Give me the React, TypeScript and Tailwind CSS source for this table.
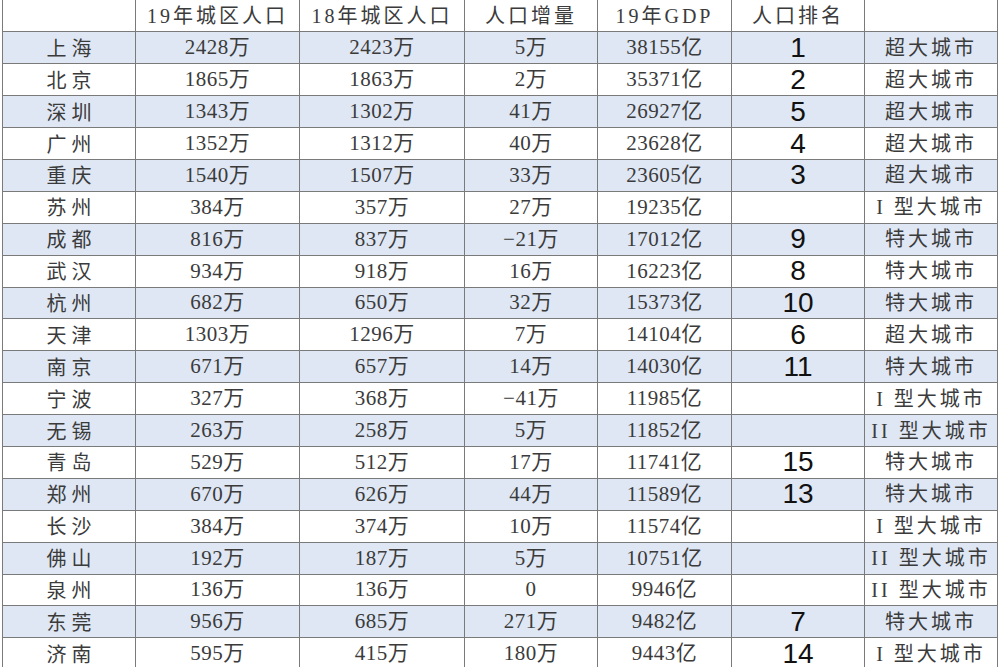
import React from 'react';

type Row = [string, string, string, string, string, string, string];

// city, 19 pop, 18 pop, delta, gdp, rank, tier
const rows: Row[] = [
  ['上海', '2428万', '2423万', '5万', '38155亿', '1', '超大城市'],
  ['北京', '1865万', '1863万', '2万', '35371亿', '2', '超大城市'],
  ['深圳', '1343万', '1302万', '41万', '26927亿', '5', '超大城市'],
  ['广州', '1352万', '1312万', '40万', '23628亿', '4', '超大城市'],
  ['重庆', '1540万', '1507万', '33万', '23605亿', '3', '超大城市'],
  ['苏州', '384万', '357万', '27万', '19235亿', '', 'I 型大城市'],
  ['成都', '816万', '837万', '−21万', '17012亿', '9', '特大城市'],
  ['武汉', '934万', '918万', '16万', '16223亿', '8', '特大城市'],
  ['杭州', '682万', '650万', '32万', '15373亿', '10', '特大城市'],
  ['天津', '1303万', '1296万', '7万', '14104亿', '6', '超大城市'],
  ['南京', '671万', '657万', '14万', '14030亿', '11', '特大城市'],
  ['宁波', '327万', '368万', '−41万', '11985亿', '', 'I 型大城市'],
  ['无锡', '263万', '258万', '5万', '11852亿', '', 'II 型大城市'],
  ['青岛', '529万', '512万', '17万', '11741亿', '15', '特大城市'],
  ['郑州', '670万', '626万', '44万', '11589亿', '13', '特大城市'],
  ['长沙', '384万', '374万', '10万', '11574亿', '', 'I 型大城市'],
  ['佛山', '192万', '187万', '5万', '10751亿', '', 'II 型大城市'],
  ['泉州', '136万', '136万', '0', '9946亿', '', 'II 型大城市'],
  ['东莞', '956万', '685万', '271万', '9482亿', '7', '特大城市'],
  ['济南', '595万', '415万', '180万', '9443亿', '14', 'I 型大城市'],
];

const headers = ['', '19年城区人口', '18年城区人口', '人口增量', '19年GDP', '人口排名', ''];
const widths = ['133px', '164px', '165px', '133px', '134px', '133px', '133px'];

const cell = 'border border-[#7a7a7a] h-[31.9px] p-0 text-center align-middle whitespace-nowrap leading-none';
const serif = "font-['Liberation_Serif','Noto_Sans_CJK_SC',serif]";
const cjk = "font-['Noto_Sans_CJK_SC',sans-serif]";

export default function App() {
  return (
    <div className="w-[1000px] h-[667px] overflow-hidden bg-white pl-[2px]">
      <table className="table-fixed border-collapse text-[#3b3b3b]">
        <colgroup>
          {widths.map((w, i) => (
            <col key={i} style={{ width: w }} />
          ))}
        </colgroup>
        <thead>
          <tr>
            {headers.map((h, i) => (
              <th key={i} className={`${cell} border-t-0 font-normal text-[20px] tracking-[3px] ${serif}`}>
                {h}
              </th>
            ))}
          </tr>
        </thead>
        <tbody>
          {rows.map((r, i) => (
            <tr key={r[0]} className={i % 2 === 0 ? 'bg-[#dfe7f4]' : 'bg-white'}>
              <td className={`${cell} text-[20px] tracking-[5px] pl-[5px] ${cjk}`}>{r[0]}</td>
              <td className={`${cell} text-[21px] tracking-[0.5px] ${serif}`}>{r[1]}</td>
              <td className={`${cell} text-[21px] tracking-[0.5px] ${serif}`}>{r[2]}</td>
              <td className={`${cell} text-[21px] tracking-[0.5px] ${serif}`}>{r[3]}</td>
              <td className={`${cell} text-[21px] tracking-[0.5px] ${serif}`}>{r[4]}</td>
              <td className={`${cell} text-[28px] text-[#111] font-['Liberation_Sans',sans-serif]`}>{r[5]}</td>
              <td className={`${cell} text-[20px] tracking-[3px] ${serif}`}>{r[6]}</td>
            </tr>
          ))}
        </tbody>
      </table>
    </div>
  );
}
